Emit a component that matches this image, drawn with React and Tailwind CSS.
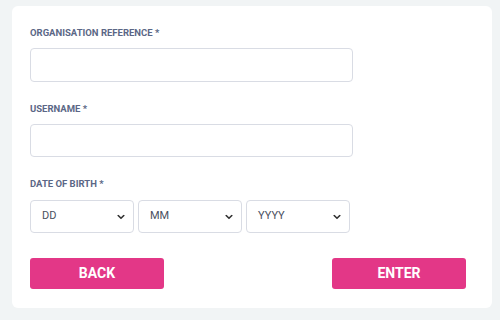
import React from "react";

function Chevron() {
  return (
    <svg width="8" height="5" viewBox="0 0 8 5" className="absolute right-[8px] top-1/2 -translate-y-1/2" fill="none">
      <path d="M1.2 1 L4 3.8 L6.8 1" stroke="#333" strokeWidth="1.6" strokeLinecap="round" strokeLinejoin="round" />
    </svg>
  );
}

function Select({ label }) {
  return (
    <div className="relative h-[33px] w-[104px] rounded-[4px] border border-[#d9dce4] bg-white flex items-center pl-[11px]">
      <span className="text-[11px] text-[#4a5060]">{label}</span>
      <Chevron />
    </div>
  );
}

function Label({ children }) {
  return <div className="text-[9.5px] font-bold text-[#5b6786] leading-[12px]">{children}</div>;
}

export default function App() {
  return (
    <div className="w-[500px] h-[320px] bg-[#f1f4f5] pt-[6px] pl-[12px]" style={{ fontFamily: "Roboto, sans-serif" }}>
      <div className="w-[480px] h-[302px] bg-white rounded-[6px] pl-[18px] pt-[21px]">
        <Label>ORGANISATION REFERENCE *</Label>
        <div className="mt-[9px] w-[323px] h-[34px] rounded-[4px] border border-[#d9dce4]" />
        <div className="mt-[21px]"><Label>USERNAME *</Label></div>
        <div className="mt-[9px] w-[323px] h-[33px] rounded-[4px] border border-[#d9dce4]" />
        <div className="mt-[21px]"><Label>DATE OF BIRTH *</Label></div>
        <div className="mt-[10px] flex gap-[4px]">
          <Select label="DD" />
          <Select label="MM" />
          <Select label="YYYY" />
        </div>
        <div className="mt-[25px] flex justify-between w-[436px]">
          <button className="w-[134px] h-[31px] rounded-[3px] bg-[#e33787] text-white font-bold text-[14px]">BACK</button>
          <button className="w-[134px] h-[31px] rounded-[3px] bg-[#e33787] text-white font-bold text-[14px]">ENTER</button>
        </div>
      </div>
    </div>
  );
}
